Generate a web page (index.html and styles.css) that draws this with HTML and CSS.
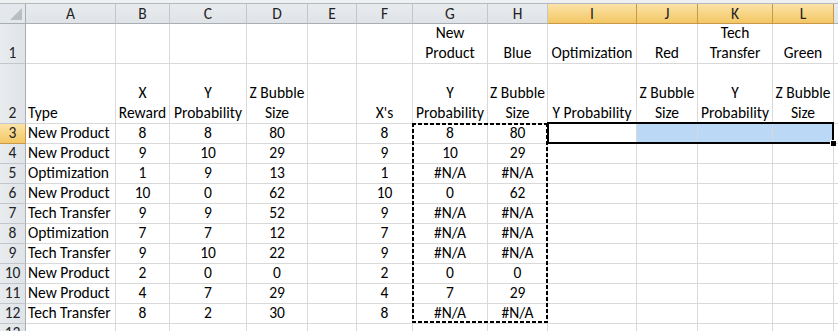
FILE: index.html
```html
<!DOCTYPE html>
<html lang="en">
<head>
    <meta charset="UTF-8">
    <title>Bubble Chart Data</title>
    <link rel="stylesheet" href="styles.css">
</head>
<body>

<div class="topbar"></div>

<div class="sheet" id="sheet">
    <div class="corner"><span class="corner-mark"></span></div>
</div>

<script>
    // Letras das colunas e quais estão selecionadas
    const cols = ["A", "B", "C", "D", "E", "F", "G", "H", "I", "J", "K", "L", ""];
    const selectedCols = ["I", "J", "K", "L"];

    // Linhas de cabeçalho (1 e 2) - o texto quebra em duas linhas com <br>
    const headerRows = [
        ["", "", "", "", "", "", "New<br>Product", "Blue", "Optimization", "Red", "Tech<br>Transfer", "Green", ""],
        ["Type", "X<br>Reward", "Y<br>Probability", "Z Bubble<br>Size", "", "X's", "Y<br>Probability", "Z Bubble<br>Size", "Y Probability", "Z Bubble<br>Size", "Y<br>Probability", "Z Bubble<br>Size", ""]
    ];

    // Dados: tipo, X, Y, Z, X's, Y filtrado, Z filtrado
    const dados = [
        ["New Product", 8, 8, 80, 8, 8, 80],
        ["New Product", 9, 10, 29, 9, 10, 29],
        ["Optimization", 1, 9, 13, 1, "#N/A", "#N/A"],
        ["New Product", 10, 0, 62, 10, 0, 62],
        ["Tech Transfer", 9, 9, 52, 9, "#N/A", "#N/A"],
        ["Optimization", 7, 7, 12, 7, "#N/A", "#N/A"],
        ["Tech Transfer", 9, 10, 22, 9, "#N/A", "#N/A"],
        ["New Product", 2, 0, 0, 2, 0, 0],
        ["New Product", 4, 7, 29, 4, 7, 29],
        ["Tech Transfer", 8, 2, 30, 8, "#N/A", "#N/A"]
    ];

    const sheet = document.getElementById("sheet");

    function addCell(cls, html) {
        const div = document.createElement("div");
        div.className = cls;
        div.innerHTML = html;
        sheet.appendChild(div);
    }

    // Cabeçalho das colunas
    cols.forEach(c => addCell("colhead" + (selectedCols.includes(c) ? " on" : ""), c));

    // Linhas 1 e 2
    headerRows.forEach((row, i) => {
        addCell("rowhead", i + 1);
        row.forEach((txt, j) => addCell("cell" + (j === 0 ? " left" : ""), txt));
    });

    // Linhas 3 a 12
    dados.forEach((d, i) => {
        const n = i + 3;
        addCell("rowhead" + (n === 3 ? " on" : ""), n);
        const row = [d[0], d[1], d[2], d[3], "", d[4], d[5], d[6], "", "", "", "", ""];
        row.forEach((txt, j) => {
            let cls = "cell" + (j === 0 ? " left" : "");
            if (n === 3 && j >= 9 && j <= 11) cls += " sel";
            addCell(cls, txt);
        });
    });

    // Linha 13 (cortada pela janela)
    addCell("rowhead", 13);
    cols.forEach(() => addCell("cell", ""));

    // Borda tracejada da cópia e a seleção ativa
    addCell("ants", "");
    addCell("selection", '<span class="fill-handle"></span>');
</script>

</body>
</html>
```

FILE: styles.css
```css
body {
    margin: 0;
    background-color: #fff;
    font-family: Carlito, Lato, sans-serif;
    font-size: 15.5px;
    color: #000;
    overflow: hidden;
}

.topbar {
    height: 3px;
    background-color: #eef0f2;
    border-bottom: 1px solid #b4b9be;
}

.sheet {
    position: relative;
    display: grid;
    grid-template-columns: 26px 90px 54px 77px 61px 49px 56px 75px 60px 89px 61px 75px 61px 1fr;
    grid-template-rows: 20px 40px 60px repeat(11, 20px);
}

.sheet > div {
    box-sizing: border-box;
    line-height: 20px;
    white-space: nowrap;
}

.corner {
    position: relative;
    background-color: #e4e7eb;
    border-right: 1px solid #a9aeb3;
    border-bottom: 1px solid #a9aeb3;
}

.corner-mark {
    position: absolute;
    right: 3px;
    bottom: 3px;
    width: 0;
    height: 0;
    border-left: 12px solid transparent;
    border-bottom: 12px solid #b9bec3;
}

.colhead {
    background: linear-gradient(#e9ecef, #dfe2e6);
    border-right: 1px solid #c3c7cb;
    border-bottom: 1px solid #a9aeb3;
    color: #222;
    text-align: center;
    line-height: 19px !important;
}

.rowhead {
    background: linear-gradient(90deg, #e9ecef, #e0e3e7);
    border-right: 1px solid #a9aeb3;
    border-bottom: 1px solid #c3c7cb;
    color: #222;
    display: flex;
    align-items: flex-end;
    justify-content: center;
}

.colhead.on,
.rowhead.on {
    background: linear-gradient(#fbe3a8, #f3c764);
    border-color: #c8994a;
}

.cell {
    border-right: 1px solid #d9d9d9;
    border-bottom: 1px solid #d9d9d9;
    display: flex;
    flex-direction: column;
    justify-content: flex-end;
    align-items: center;
    text-align: center;
    padding: 0 2px;
}

.cell.left {
    align-items: flex-start;
    text-align: left;
}

.cell.sel {
    background-color: #bcd8f7;
}

/* borda tracejada em volta de G3:H12 */
.ants {
    position: absolute;
    grid-column: 8 / 10;
    grid-row: 4 / 14;
    top: -1px;
    left: -1px;
    right: 0;
    bottom: 1px;
    background:
        repeating-linear-gradient(90deg, #000 0 4px, transparent 4px 6px) top left / 100% 2px no-repeat,
        repeating-linear-gradient(90deg, #000 0 4px, transparent 4px 6px) bottom left / 100% 2px no-repeat,
        repeating-linear-gradient(180deg, #000 0 4px, transparent 4px 6px) top left / 2px 100% no-repeat,
        repeating-linear-gradient(180deg, #000 0 4px, transparent 4px 6px) top right / 2px 100% no-repeat;
}

/* seleção I3:L3 */
.selection {
    position: absolute;
    grid-column: 10 / 14;
    grid-row: 4 / 5;
    top: -2px;
    left: -1px;
    right: 0;
    bottom: 0;
    border: 2px solid #000;
}

.fill-handle {
    position: absolute;
    right: -4px;
    bottom: -4px;
    width: 5px;
    height: 5px;
    background-color: #000;
    border: 1px solid #fff;
    border-right: none;
    border-bottom: none;
}
```
